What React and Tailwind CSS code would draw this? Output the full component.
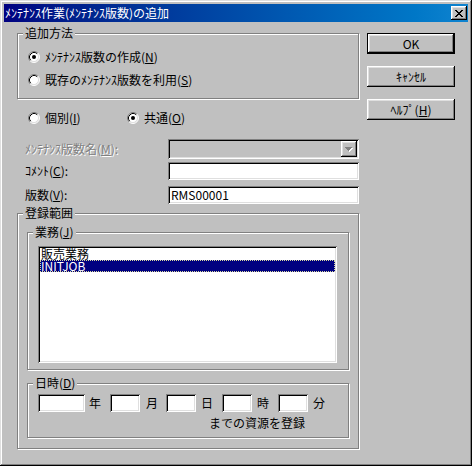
import React from "react";

const FONT = "font-['Noto_Sans_CJK_JP','Noto_Sans_CJK_SC',sans-serif]";
const SUNKEN =
  "shadow-[inset_1px_1px_#808080,inset_-1px_-1px_#fff,inset_2px_2px_#000,inset_-2px_-2px_#dfdfdf]";
const RAISED =
  "shadow-[inset_-1px_-1px_#000,inset_1px_1px_#fff,inset_-2px_-2px_#808080,inset_2px_2px_#dfdfdf]";
const ETCHED =
  "border border-[#808080] shadow-[1px_1px_0_#fff,inset_1px_1px_0_#fff]";

const Radio = ({ checked }) => (
  <svg width="12" height="12" viewBox="0 0 12 12" className="shrink-0">
    <circle cx="6" cy="6" r="5" fill="#fff" />
    <path d="M2.11 9.89 A5.5 5.5 0 0 1 9.89 2.11" stroke="#808080" fill="none" />
    <path d="M9.89 2.11 A5.5 5.5 0 0 1 2.11 9.89" stroke="#fff" fill="none" />
    <path d="M2.82 9.18 A4.5 4.5 0 0 1 9.18 2.82" stroke="#000" fill="none" />
    <path d="M9.18 2.82 A4.5 4.5 0 0 1 2.82 9.18" stroke="#dfdfdf" fill="none" />
    {checked && <circle cx="6" cy="6" r="2" fill="#000" />}
  </svg>
);

// group box with a caption sitting on the top edge
const Group = ({ label, className, children }) => (
  <div className={`relative ${ETCHED} ${className}`}>
    <span className="absolute left-[5px] -top-[7px] bg-[#c0c0c0] px-[2px] leading-[12px] whitespace-nowrap">
      {label}
    </span>
    {children}
  </div>
);

const Button = ({ children, isDefault }) => (
  <div className={`h-[21px] w-[88px] ${isDefault ? "border border-black" : ""}`}>
    <div className={`h-full w-full flex items-center justify-center ${RAISED}`}>
      {children}
    </div>
  </div>
);

const CloseGlyph = () => {
  const rows = ["11000011", "01100110", "00111100", "00011000", "00111100", "01100110", "11000011"];
  return (
    <svg width="8" height="7" viewBox="0 0 8 7" shapeRendering="crispEdges">
      {rows.map((r, y) =>
        r.split("").map((c, x) =>
          c === "1" ? <rect key={`${x}-${y}`} x={x} y={y} width="1" height="1" fill="#000" /> : null
        )
      )}
    </svg>
  );
};

const Field = ({ w, h = "h-[18px]", value }) => (
  <div className={`${w} ${h} bg-white ${SUNKEN} px-[3px] flex items-center text-black`}>
    {value}
  </div>
);

export default function App() {
  return (
    <div
      className={`w-[472px] h-[466px] bg-[#c0c0c0] ${FONT} text-[12px] leading-[12px] text-black p-[4px] shadow-[inset_-1px_-1px_#000,inset_1px_1px_#dfdfdf,inset_-2px_-2px_#808080,inset_2px_2px_#fff]`}
    >
      {/* title bar */}
      <div className="h-[18px] flex items-center justify-between bg-gradient-to-r from-[#000080] to-[#1084d0] pl-[1px] pr-[1px]">
        <span className="text-white whitespace-nowrap">ﾒﾝﾃﾅﾝｽ作業(ﾒﾝﾃﾅﾝｽ版数)の追加</span>
        <div className={`w-[16px] h-[14px] bg-[#c0c0c0] flex items-center justify-center ${RAISED}`}>
          <CloseGlyph />
        </div>
      </div>

      <div className="flex pl-[13px] pt-[11px]">
        {/* left column */}
        <div className="w-[342px] flex flex-col">
          <Group label="追加方法" className="h-[66px] pl-[10px] pt-[17px]">
            <div className="flex items-center gap-[5px] h-[12px] whitespace-nowrap">
              <Radio checked />
              <span>ﾒﾝﾃﾅﾝｽ版数の作成(<u>N</u>)</span>
            </div>
            <div className="flex items-center gap-[5px] h-[12px] mt-[11px] whitespace-nowrap">
              <Radio />
              <span>既存のﾒﾝﾃﾅﾝｽ版数を利用(<u>S</u>)</span>
            </div>
          </Group>

          <div className="flex items-center h-[12px] mt-[13px] pl-[11px] whitespace-nowrap">
            <div className="w-[99px] flex items-center gap-[5px]">
              <Radio />
              <span>個別(<u>I</u>)</span>
            </div>
            <div className="flex items-center gap-[5px]">
              <Radio checked />
              <span>共通(<u>O</u>)</span>
            </div>
          </div>

          <div className="flex items-center mt-[15px] h-[20px]">
            <span className="w-[151px] pl-[8px] text-[#808080] [text-shadow:1px_1px_0_#fff] whitespace-nowrap">
              ﾒﾝﾃﾅﾝｽ版数名(<u>M</u>):
            </span>
            <div className={`w-[191px] h-[20px] bg-[#c0c0c0] ${SUNKEN} p-[2px] flex justify-end`}>
              <div className={`w-[16px] h-full flex items-center justify-center ${RAISED}`}>
                <svg width="8" height="5" viewBox="0 0 8 5" shapeRendering="crispEdges">
                  <path d="M1 1h7l-3.5 4z" fill="#fff" />
                  <path d="M0 0h7l-3.5 4z" fill="#808080" />
                </svg>
              </div>
            </div>
          </div>

          <div className="flex items-center mt-[3px] h-[18px]">
            <span className="w-[151px] pl-[8px] whitespace-nowrap">ｺﾒﾝﾄ(<u>C</u>):</span>
            <Field w="w-[191px]" />
          </div>

          <div className="flex items-center mt-[6px] h-[18px]">
            <span className="w-[151px] pl-[8px] whitespace-nowrap">版数(<u>V</u>):</span>
            <Field w="w-[191px]" value="RMS00001" />
          </div>

          <Group label="登録範囲" className="h-[236px] mt-[9px] pl-[9px] pt-[18px]">
            <Group label={<span>業務(<u>J</u>)</span>} className="w-[322px] h-[138px] pl-[10px] pt-[13px]">
              <div className={`w-[299px] h-[117px] bg-white ${SUNKEN} p-[2px]`}>
                <div className="h-[12px] pl-[1px] flex items-center whitespace-nowrap">販売業務</div>
                <div className="h-[12px] pl-[1px] flex items-center bg-[#000080] text-white outline outline-1 outline-dotted outline-[#d8d8a0] -outline-offset-1 whitespace-nowrap">
                  INITJOB
                </div>
              </div>
            </Group>

            <Group label={<span>日時(<u>D</u>)</span>} className="w-[322px] h-[55px] mt-[13px] pl-[10px] pt-[10px]">
              <div className="flex items-center h-[18px]">
                <div className="w-[72px] flex items-center">
                  <Field w="w-[47px]" />
                  <span className="ml-[4px]">年</span>
                </div>
                <div className="w-[56px] flex items-center">
                  <Field w="w-[30px]" />
                  <span className="ml-[6px]">月</span>
                </div>
                <div className="w-[56px] flex items-center">
                  <Field w="w-[30px]" />
                  <span className="ml-[5px]">日</span>
                </div>
                <div className="w-[56px] flex items-center">
                  <Field w="w-[30px]" />
                  <span className="ml-[5px]">時</span>
                </div>
                <div className="flex items-center">
                  <Field w="w-[30px]" />
                  <span className="ml-[5px]">分</span>
                </div>
              </div>
              <div className="mt-[5px] ml-[171px] whitespace-nowrap">までの資源を登録</div>
            </Group>
          </Group>
        </div>

        {/* right column: buttons */}
        <div className="ml-[8px] flex flex-col gap-[12px]">
          <Button isDefault>OK</Button>
          <Button>ｷｬﾝｾﾙ</Button>
          <Button>
            <span>ﾍﾙﾌﾟ(<u>H</u>)</span>
          </Button>
        </div>
      </div>
    </div>
  );
}
